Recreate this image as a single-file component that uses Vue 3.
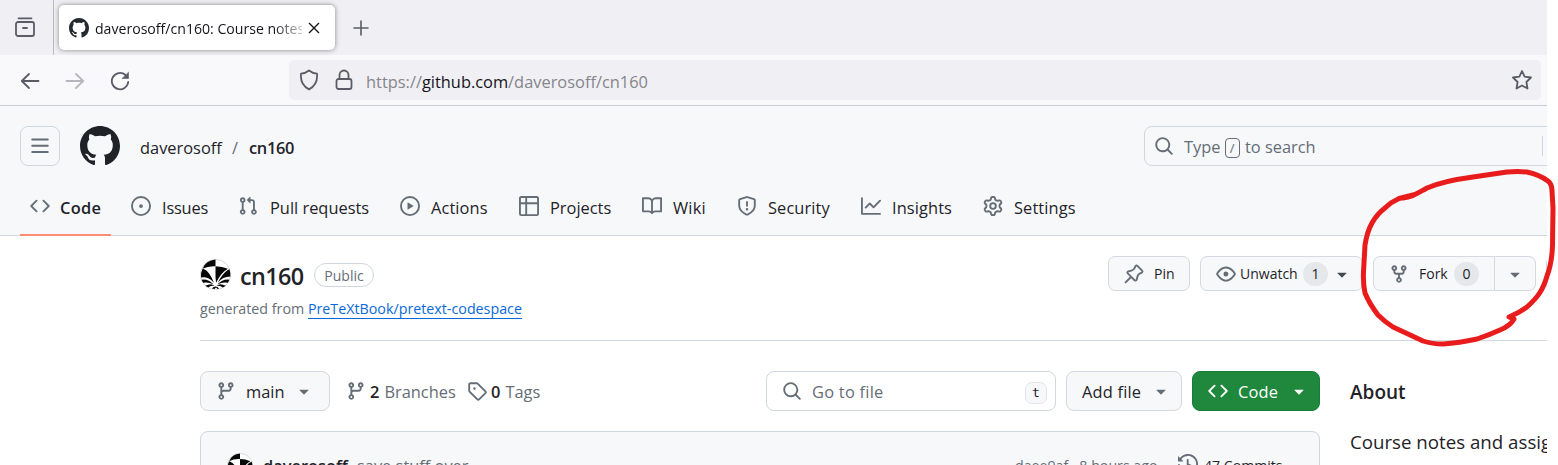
<script setup>
import { h } from 'vue'

const paths = {
  code: 'm11.28 3.22 4.25 4.25a.75.75 0 0 1 0 1.06l-4.25 4.25a.749.749 0 0 1-1.275-.326.749.749 0 0 1 .215-.734L13.94 8l-3.72-3.72a.749.749 0 0 1 .326-1.275.749.749 0 0 1 .734.215Zm-6.56 0a.751.751 0 0 1 1.042.018.751.751 0 0 1 .018 1.042L2.06 8l3.72 3.72a.749.749 0 0 1-.326 1.275.749.749 0 0 1-.734-.215L.47 8.53a.75.75 0 0 1 0-1.06Z',
  issue: 'M8 9.5a1.5 1.5 0 1 0 0-3 1.5 1.5 0 0 0 0 3ZM8 0a8 8 0 1 1 0 16A8 8 0 0 1 8 0ZM1.5 8a6.5 6.5 0 1 0 13 0 6.5 6.5 0 0 0-13 0Z',
  pr: 'M1.5 3.25a2.25 2.25 0 1 1 3 2.122v5.256a2.251 2.251 0 1 1-1.5 0V5.372A2.25 2.25 0 0 1 1.5 3.25Zm5.677-.177L9.573.677A.25.25 0 0 1 10 .854V2.5h1A2.5 2.5 0 0 1 13.5 5v5.628a2.251 2.251 0 1 1-1.5 0V5a1 1 0 0 0-1-1h-1v1.646a.25.25 0 0 1-.427.177L7.177 3.427a.25.25 0 0 1 0-.354ZM3.75 2.5a.75.75 0 1 0 0 1.5.75.75 0 0 0 0-1.5Zm0 9.5a.75.75 0 1 0 0 1.5.75.75 0 0 0 0-1.5Zm8.25.75a.75.75 0 1 0 1.5 0 .75.75 0 0 0-1.5 0Z',
  play: 'M8 0a8 8 0 1 1 0 16A8 8 0 0 1 8 0ZM1.5 8a6.5 6.5 0 1 0 13 0 6.5 6.5 0 0 0-13 0Zm4.879-2.773 4.264 2.559a.25.25 0 0 1 0 .428l-4.264 2.559A.25.25 0 0 1 6 10.559V5.442a.25.25 0 0 1 .379-.215Z',
  table: 'M0 1.75C0 .784.784 0 1.75 0h12.5C15.216 0 16 .784 16 1.75v12.5A1.75 1.75 0 0 1 14.25 16H1.75A1.75 1.75 0 0 1 0 14.25ZM6.5 6.5v8h7.75a.25.25 0 0 0 .25-.25V6.5Zm8-1.5V1.75a.25.25 0 0 0-.25-.25H6.5V5Zm-13 1.5v7.75c0 .138.112.25.25.25H5v-8ZM5 5V1.5H1.75a.25.25 0 0 0-.25.25V5Z',
  book: 'M0 1.75A.75.75 0 0 1 .75 1h4.253c1.227 0 2.317.59 3 1.501A3.743 3.743 0 0 1 11.006 1h4.245a.75.75 0 0 1 .75.75v10.5a.75.75 0 0 1-.75.75h-4.507a2.25 2.25 0 0 0-1.591.659l-.622.621a.75.75 0 0 1-1.06 0l-.622-.621A2.25 2.25 0 0 0 5.258 13H.75a.75.75 0 0 1-.75-.75Zm7.251 10.324.004-5.073-.002-2.253A2.25 2.25 0 0 0 5.003 2.5H1.5v9h3.757a3.75 3.75 0 0 1 1.994.574ZM8.755 4.75l-.004 7.322a3.752 3.752 0 0 1 1.992-.572H14.5v-9h-3.495a2.25 2.25 0 0 0-2.25 2.25Z',
  shield: 'M7.467.133a1.748 1.748 0 0 1 1.066 0l5.25 1.68A1.75 1.75 0 0 1 15 3.48V7c0 1.566-.32 3.182-1.303 4.682-.983 1.498-2.585 2.813-5.032 3.855a1.697 1.697 0 0 1-1.33 0c-2.447-1.042-4.049-2.357-5.032-3.855C1.32 10.182 1 8.566 1 7V3.48a1.75 1.75 0 0 1 1.217-1.667Zm.61 1.429a.25.25 0 0 0-.153 0l-5.25 1.68a.25.25 0 0 0-.174.238V7c0 1.358.275 2.666 1.057 3.86.784 1.194 2.121 2.34 4.366 3.297a.196.196 0 0 0 .154 0c2.245-.956 3.582-2.104 4.366-3.298C13.225 9.666 13.5 8.36 13.5 7V3.48a.251.251 0 0 0-.174-.237l-5.25-1.68ZM8.75 4.75v3a.75.75 0 0 1-1.5 0v-3a.75.75 0 0 1 1.5 0ZM9 10.5a1 1 0 1 1-2 0 1 1 0 0 1 2 0Z',
  graph: 'M1.5 1.75V13.5h13.75a.75.75 0 0 1 0 1.5H.75a.75.75 0 0 1-.75-.75V1.75a.75.75 0 0 1 1.5 0Zm14.28 2.53-5.25 5.25a.75.75 0 0 1-1.06 0L7 7.06 4.28 9.78a.751.751 0 0 1-1.042-.018.751.751 0 0 1-.018-1.042l3.25-3.25a.75.75 0 0 1 1.06 0L10 7.94l4.72-4.72a.751.751 0 0 1 1.042.018.751.751 0 0 1 .018 1.042Z',
  gear: 'M8 0a8.2 8.2 0 0 1 .701.031C9.444.095 9.99.645 10.16 1.29l.288 1.107c.018.066.079.158.212.224.231.114.454.243.668.386.123.082.233.09.299.071l1.103-.303c.644-.176 1.392.021 1.82.63.27.385.506.792.704 1.218.315.675.111 1.422-.364 1.891l-.814.806c-.049.048-.098.147-.088.294.016.257.016.515 0 .772-.01.147.038.246.088.294l.814.806c.475.469.679 1.216.364 1.891a7.977 7.977 0 0 1-.704 1.217c-.428.61-1.176.807-1.82.63l-1.102-.302c-.067-.019-.177-.011-.3.071a5.909 5.909 0 0 1-.668.386c-.133.066-.194.158-.211.224l-.29 1.106c-.168.646-.715 1.196-1.458 1.26a8.006 8.006 0 0 1-1.402 0c-.743-.064-1.289-.614-1.458-1.26l-.289-1.106c-.018-.066-.079-.158-.212-.224a5.738 5.738 0 0 1-.668-.386c-.123-.082-.233-.09-.299-.071l-1.103.303c-.644.176-1.392-.021-1.82-.63a8.12 8.12 0 0 1-.704-1.218c-.315-.675-.111-1.422.363-1.891l.815-.806c.05-.048.098-.147.088-.294a6.214 6.214 0 0 1 0-.772c.01-.147-.038-.246-.088-.294l-.815-.806C.635 6.045.431 5.298.746 4.623a7.92 7.92 0 0 1 .704-1.217c.428-.61 1.176-.807 1.82-.63l1.102.302c.067.019.177.011.3-.071.214-.143.437-.272.668-.386.133-.066.194-.158.211-.224l.29-1.106C6.009.645 6.556.095 7.299.03 7.53.01 7.764 0 8 0Zm-.571 1.525c-.036.003-.108.036-.137.146l-.289 1.105c-.147.561-.549.967-.998 1.189-.173.086-.34.183-.5.29-.417.278-.97.423-1.529.27l-1.103-.303c-.109-.03-.175.016-.195.045-.22.312-.412.644-.573.99-.014.031-.021.11.059.19l.815.806c.411.406.562.957.53 1.456a4.709 4.709 0 0 0 0 .582c.032.499-.119 1.05-.53 1.456l-.815.806c-.081.08-.073.159-.059.19.162.346.353.677.573.989.02.03.085.076.195.046l1.102-.303c.56-.153 1.113-.008 1.53.27.161.107.328.204.501.29.447.222.85.629.997 1.189l.289 1.105c.029.109.101.143.137.146a6.6 6.6 0 0 0 1.142 0c.036-.003.108-.036.137-.146l.289-1.105c.147-.561.549-.967.998-1.189.173-.086.34-.183.5-.29.417-.278.97-.423 1.529-.27l1.103.303c.109.029.175-.016.195-.045.22-.313.411-.644.573-.99.014-.031.021-.11-.059-.19l-.815-.806c-.411-.406-.562-.957-.53-1.456a4.709 4.709 0 0 0 0-.582c-.032-.499.119-1.05.53-1.456l.815-.806c.081-.08.073-.159.059-.19a6.464 6.464 0 0 0-.573-.989c-.02-.03-.085-.076-.195-.046l-1.102.303c-.56.153-1.113.008-1.53-.27a4.44 4.44 0 0 0-.501-.29c-.447-.222-.85-.629-.997-1.189l-.289-1.105c-.029-.11-.101-.143-.137-.146a6.6 6.6 0 0 0-1.142 0ZM11 8a3 3 0 1 1-6 0 3 3 0 0 1 6 0ZM9.5 8a1.5 1.5 0 1 0-3.001.001A1.5 1.5 0 0 0 9.5 8Z',
  bars: 'M1 2.75A.75.75 0 0 1 1.75 2h12.5a.75.75 0 0 1 0 1.5H1.75A.75.75 0 0 1 1 2.75Zm0 5A.75.75 0 0 1 1.75 7h12.5a.75.75 0 0 1 0 1.5H1.75A.75.75 0 0 1 1 7.75ZM1.75 12h12.5a.75.75 0 0 1 0 1.5H1.75a.75.75 0 0 1 0-1.5Z',
  search: 'M10.68 11.74a6 6 0 0 1-7.922-8.982 6 6 0 0 1 8.982 7.922l3.04 3.04a.749.749 0 0 1-.326 1.275.749.749 0 0 1-.734-.215ZM11.5 7a4.499 4.499 0 1 0-8.997 0A4.499 4.499 0 0 0 11.5 7Z',
  pin: 'm11.294.984 3.722 3.722a1.75 1.75 0 0 1-.504 2.826l-1.327.613a3.089 3.089 0 0 0-1.707 2.084l-.584 2.454c-.317 1.332-1.972 1.8-2.94.832L5.75 11.311 1.78 15.28a.749.749 0 1 1-1.06-1.06l3.969-3.97-2.204-2.204c-.968-.968-.5-2.623.832-2.94l2.454-.584a3.08 3.08 0 0 0 2.084-1.707l.613-1.327a1.75 1.75 0 0 1 2.826-.504ZM6.283 9.723l2.732 2.731a.25.25 0 0 0 .42-.119l.584-2.454a4.586 4.586 0 0 1 2.537-3.098l1.328-.613a.25.25 0 0 0 .072-.404l-3.722-3.722a.25.25 0 0 0-.404.072l-.613 1.328a4.584 4.584 0 0 1-3.098 2.537l-2.454.584a.25.25 0 0 0-.119.42l2.731 2.732Z',
  eye: 'M8 2c1.981 0 3.671.992 4.933 2.078 1.27 1.091 2.187 2.345 2.637 3.023a1.62 1.62 0 0 1 0 1.798c-.45.678-1.367 1.932-2.637 3.023C11.67 13.008 9.981 14 8 14c-1.981 0-3.671-.992-4.933-2.078C1.797 10.83.88 9.576.43 8.898a1.62 1.62 0 0 1 0-1.798c.45-.677 1.367-1.931 2.637-3.022C4.33 2.992 6.019 2 8 2ZM1.679 7.932a.12.12 0 0 0 0 .136c.411.622 1.241 1.75 2.366 2.717C5.176 11.758 6.527 12.5 8 12.5c1.473 0 2.825-.742 3.955-1.715 1.124-.967 1.954-2.096 2.366-2.717a.12.12 0 0 0 0-.136c-.412-.621-1.242-1.75-2.366-2.717C10.824 4.242 9.473 3.5 8 3.5c-1.473 0-2.825.742-3.955 1.715-1.124.967-1.954 2.096-2.366 2.717ZM8 10a2 2 0 1 1-.001-3.999A2 2 0 0 1 8 10Z',
  fork: 'M5 5.372v.878c0 .414.336.75.75.75h4.5a.75.75 0 0 0 .75-.75v-.878a2.25 2.25 0 1 1 1.5 0v.878a2.25 2.25 0 0 1-2.25 2.25h-1.5v2.128a2.251 2.251 0 1 1-1.5 0V8.5h-1.5A2.25 2.25 0 0 1 3.5 6.25v-.878a2.25 2.25 0 1 1 1.5 0ZM5 3.25a.75.75 0 1 0-1.5 0 .75.75 0 0 0 1.5 0Zm6.75.75a.75.75 0 1 0 0-1.5.75.75 0 0 0 0 1.5Zm-3 8.75a.75.75 0 1 0-1.5 0 .75.75 0 0 0 1.5 0Z',
  branch: 'M9.5 3.25a2.25 2.25 0 1 1 3 2.122V6A2.5 2.5 0 0 1 10 8.5H6a1 1 0 0 0-1 1v1.128a2.251 2.251 0 1 1-1.5 0V5.372a2.25 2.25 0 1 1 1.5 0v1.836A2.493 2.493 0 0 1 6 7h4a1 1 0 0 0 1-1v-.628A2.25 2.25 0 0 1 9.5 3.25Zm-6 0a.75.75 0 1 0 1.5 0 .75.75 0 0 0-1.5 0Zm8.25-.75a.75.75 0 1 0 0 1.5.75.75 0 0 0 0-1.5ZM4.25 12a.75.75 0 1 0 0 1.5.75.75 0 0 0 0-1.5Z',
  tag: 'M1 7.775V2.75C1 1.784 1.784 1 2.75 1h5.025c.464 0 .91.184 1.238.513l6.25 6.25a1.75 1.75 0 0 1 0 2.474l-5.026 5.026a1.75 1.75 0 0 1-2.474 0l-6.25-6.25A1.752 1.752 0 0 1 1 7.775Zm1.5 0c0 .066.026.13.073.177l6.25 6.25a.25.25 0 0 0 .354 0l5.025-5.025a.25.25 0 0 0 0-.354l-6.25-6.25a.25.25 0 0 0-.177-.073H2.75a.25.25 0 0 0-.25.25ZM6 5a1 1 0 1 1 0 2 1 1 0 0 1 0-2Z',
  history: 'm.427 1.927 1.215 1.215a8.002 8.002 0 1 1-1.6 5.685.75.75 0 1 1 1.493-.154 6.5 6.5 0 1 0 1.18-4.458l1.358 1.358A.25.25 0 0 1 3.896 6H.25A.25.25 0 0 1 0 5.75V2.104a.25.25 0 0 1 .427-.177ZM7.75 4a.75.75 0 0 1 .75.75v2.992l2.028.812a.75.75 0 0 1-.557 1.392l-2.5-1A.751.751 0 0 1 7 8.25v-3.5A.75.75 0 0 1 7.75 4Z',
  github: 'M8 0c4.42 0 8 3.58 8 8a8.013 8.013 0 0 1-5.45 7.59c-.4.08-.55-.17-.55-.38 0-.27.01-1.13.01-2.2 0-.75-.25-1.23-.54-1.48 1.78-.2 3.65-.88 3.65-3.95 0-.88-.31-1.59-.82-2.15.08-.2.36-1.02-.08-2.12 0 0-.67-.22-2.2.82-.64-.18-1.32-.27-2-.27-.68 0-1.36.09-2 .27-1.53-1.03-2.2-.82-2.2-.82-.44 1.1-.16 1.92-.08 2.12-.51.56-.82 1.28-.82 2.15 0 3.06 1.86 3.75 3.64 3.95-.23.2-.44.55-.51 1.07-.46.21-1.61.55-2.33-.66-.15-.24-.6-.83-1.23-.82-.67.01-.27.38.01.53.34.19.73.9.82 1.13.16.45.68 1.31 2.69.94 0 .67.01 1.3.01 1.49 0 .21-.15.45-.55.38A7.995 7.995 0 0 1 0 8c0-4.42 3.58-8 8-8Z',
  caret: 'm4.427 7.427 3.396 3.396a.25.25 0 0 0 .354 0l3.396-3.396A.25.25 0 0 0 11.396 7H4.604a.25.25 0 0 0-.177.427Z',
}

const Octicon = (props) =>
  h('svg', { viewBox: '0 0 16 16', fill: 'currentColor', class: 'octicon' }, [h('path', { d: paths[props.name] })])
Octicon.props = ['name']

const avatarShapes = [
  'M15 0.600V7Q8 6.500 2.500 9.500Q5.500 1.500 15 0.600Z',
  'M15 7Q21.500 7 27 9.500Q20.500 13 15.600 23L15 18Z',
  'M2.500 9.500L4 10Q9 12 13.500 23Q7.500 16.500 1 18Q0.500 13 2.500 9.500Z',
  'M28.500 10Q29.500 13 29.400 17Q22 17 17.200 23Q21.500 14.500 26.500 11Z',
  'M1.500 20Q8 19 13 24.500Q8 22 3 23Z',
  'M28.500 20Q22 19 17 24.500Q22 22 27 23Z',
  'M5 26Q11 23 14 26Q10 25.500 8 27.500Z',
  'M25 26Q19 23 16 26Q20 25.500 22 27.500Z',
  'M11.500 28.500Q13 26.500 15 26.500Q17 26.500 18.500 28.500L17 29L15.500 27.500L14 29Z',
]
const Avatar = () =>
  h('svg', { viewBox: '0 0 30 30', class: 'avatar' }, [
    h('circle', { cx: 15, cy: 15, r: 14.6, fill: '#fff', stroke: '#c9cdd2', 'stroke-width': 0.8 }),
    ...avatarShapes.map((d) => h('path', { d, fill: '#080808' })),
  ])

const tabs = [
  { id: 'code', label: 'Code', icon: 'code' },
  { id: 'issues', label: 'Issues', icon: 'issue' },
  { id: 'pulls', label: 'Pull requests', icon: 'pr' },
  { id: 'actions', label: 'Actions', icon: 'play' },
  { id: 'projects', label: 'Projects', icon: 'table' },
  { id: 'wiki', label: 'Wiki', icon: 'book' },
  { id: 'security', label: 'Security', icon: 'shield' },
  { id: 'insights', label: 'Insights', icon: 'graph' },
  { id: 'settings', label: 'Settings', icon: 'gear' },
]
</script>

<template>
  <div class="screen">
    <div class="window">
      <div class="tabstrip">
        <div class="view">
          <svg class="line-icon" width="22" height="22" viewBox="0 0 22 22">
            <path d="M4.5 2.300h13M4 6h14a2 2 0 0 1 2 2v10a2 2 0 0 1-2 2H4a2 2 0 0 1-2-2V8a2 2 0 0 1 2-2ZM9 12h4" />
          </svg>
        </div>
        <div class="tab">
          <Octicon name="github" />
          <span class="tab-title">daverosoff/cn160: Course notes</span>
          <svg class="close" width="12" height="12" viewBox="0 0 12 12"><path d="M1 1l10 10M11 1L1 11" /></svg>
        </div>
        <svg class="line-icon plus" width="16" height="16" viewBox="0 0 16 16"><path d="M8 1v14M1 8h14" /></svg>
      </div>

      <div class="toolbar">
        <div class="history-buttons">
          <svg class="line-icon" width="20" height="20" viewBox="0 0 20 20"><path d="M18.500 10H2M9 3L1.800 10 9 17" /></svg>
          <svg class="line-icon dim" width="20" height="20" viewBox="0 0 20 20"><path d="M1.500 10H18M11 3L18.200 10 11 17" /></svg>
          <svg class="line-icon" width="20" height="20" viewBox="0 0 20 20">
            <path d="M18.200 11A8.200 8.200 0 1 1 15.500 4" /><path class="solid" d="M18.500 1.500v6h-6.200Z" />
          </svg>
        </div>
        <div class="urlbar">
          <svg class="line-icon" width="20" height="22" viewBox="0 0 20 22"><path d="M10 1.500c2.500 2 5 3 8 3.200.6 6-1 12-8 15.700C3 16.700 1.400 10.700 2 4.700 5 4.500 7.500 3.500 10 1.500Z" /></svg>
          <svg class="line-icon lock" width="18" height="22" viewBox="0 0 18 22"><path d="M4.500 10V6a4.500 4.500 0 0 1 9 0v4M3.500 10h11a2 2 0 0 1 2 2v6a2 2 0 0 1-2 2h-11a2 2 0 0 1-2-2v-6a2 2 0 0 1 2-2Z" /></svg>
          <span class="url">https://<b>github.com</b>/daverosoff/cn160</span>
          <svg class="line-icon star" width="22" height="22" viewBox="0 0 22 22"><path d="M11 2l2.600 5.700 6.400.8-4.600 4.500 1.100 6.500L11 16.500 5.500 19.500 6.600 13 2 8.500l6.400-.8Z" /></svg>
        </div>
      </div>

      <header class="gh-header">
        <div class="context">
          <button class="menu"><Octicon name="bars" /></button>
          <Octicon name="github" class="mark" />
          <span class="owner">daverosoff</span>
          <span class="slash">/</span>
          <span class="repo">cn160</span>
          <div class="gh-search">
            <Octicon name="search" />
            <span class="ph">Type <kbd>/</kbd> to search</span>
            <i class="divider"></i>
          </div>
        </div>
        <nav class="nav">
          <a v-for="t in tabs" :key="t.id" :class="['nav-item', t.id]">
            <Octicon :name="t.icon" /><span>{{ t.label }}</span>
          </a>
        </nav>
      </header>

      <main class="main">
        <section class="repo-head">
          <div class="repo-info">
            <div class="title-row">
              <Avatar />
              <h1>cn160</h1>
              <span class="label">Public</span>
            </div>
            <p class="origin">generated from <a>PreTeXtBook/pretext-codespace</a></p>
          </div>
          <div class="repo-actions">
            <button class="btn pin"><Octicon name="pin" /><span>Pin</span></button>
            <button class="btn watch"><Octicon name="eye" /><span>Unwatch</span><em>1</em><Octicon name="caret" class="caret" /></button>
            <div class="fork-group">
              <button class="btn fork"><Octicon name="fork" /><span>Fork</span><em>0</em></button>
              <button class="btn more"><Octicon name="caret" class="caret" /></button>
            </div>
            <button class="btn edge"></button>
          </div>
        </section>

        <div class="columns">
          <div class="files">
            <div class="file-bar">
              <button class="btn big main-branch"><Octicon name="branch" /><span>main</span><Octicon name="caret" class="caret" /></button>
              <span class="stat branches"><Octicon name="branch" /><b>2</b> Branches</span>
              <span class="stat tags"><Octicon name="tag" /><b>0</b> Tags</span>
              <div class="go-file"><Octicon name="search" /><span>Go to file</span><kbd>t</kbd></div>
              <button class="btn big add"><span>Add file</span><Octicon name="caret" class="caret" /></button>
              <button class="btn big clone"><Octicon name="code" /><span>Code</span><Octicon name="caret" class="caret" /></button>
            </div>
            <div class="commit">
              <Avatar />
              <b>daverosoff</b>
              <span class="msg">save stuff over</span>
              <span class="sha">daee9af · 8 hours ago</span>
              <Octicon name="history" />
              <span class="count">47 Commits</span>
            </div>
          </div>
          <aside class="about">
            <h2>About</h2>
            <p>Course notes and assignments</p>
          </aside>
        </div>
      </main>
    </div>

    <svg class="marker" width="1558" height="465" viewBox="0 0 1558 465">
      <path d="M1403 198C1412 197 1416 194 1427 188Q1443 181 1473 177L1507 172Q1518 171 1527 172Q1540 175 1548 181Q1552 184 1552 191L1553 208L1552.500 245Q1552 263 1547 276C1543 290 1538 297 1527 307Q1519 313 1509 317L1514 319Q1510 326 1500 330Q1489 335 1477 339Q1459 343 1443 344Q1432 344 1423 341Q1408 334 1393 327Q1385 322 1378 315Q1369 303 1365 293Q1363 284 1363.500 272L1365 245Q1367 232 1372 223Q1377 214 1385 208Q1391 202 1399 198.500L1415 194.500" />
    </svg>
  </div>
</template>

<style>
body { background: #fff; overflow: hidden; }
</style>

<style scoped>
* { box-sizing: border-box; }
.screen {
  position: relative; width: 1558px; height: 465px; overflow: hidden; background: #fff;
  font-family: "Open Sans", "Noto Sans", sans-serif; font-size: 16.4px; color: #1f2328;
}
.window { width: 1547px; height: 465px; overflow: hidden; }
svg { flex: none; display: block; }
span, b, em, h1, h2 { white-space: nowrap; }
button { font: inherit; color: inherit; margin: 0; padding: 0; }
.octicon { width: 20px; height: 20px; color: #656d76; }
.line-icon { fill: none; stroke: #5b5b66; stroke-width: 1.8; stroke-linecap: round; stroke-linejoin: round; }
.line-icon .solid { fill: #5b5b66; stroke-width: 0.6; }
.dim { opacity: 0.42; }

.tabstrip { height: 55px; background: #f0f0f4; display: flex; align-items: center; }
.view { width: 54px; height: 55px; border-right: 1px solid #b8b8be; padding: 16px 0 0 14px; }
.tab {
  width: 276px; height: 45px; margin-left: 5px; padding: 0 15px 0 10px; display: flex; align-items: center;
  background: #fff; border-radius: 5px; box-shadow: 0 0 5px rgba(0, 0, 0, 0.45);
}
.tab .octicon { color: #24292f; }
.tab-title {
  width: 207px; margin-left: 6px; margin-right: 6px; padding-top: 1px; overflow: hidden; font-size: 14.1px; color: #15141a;
  mask-image: linear-gradient(to right, #000 178px, transparent 216px);
}
.close { fill: none; stroke: #15141a; stroke-width: 1.4; }
.plus { margin-left: 18px; stroke-width: 1.6; }

.toolbar { height: 51px; background: #f9f9fb; border-bottom: 1px solid #ccccd1; display: flex; padding: 5px 6px 0 20px; }
.history-buttons { width: 269px; height: 40px; display: flex; align-items: center; gap: 25px; padding-top: 2px; }
.urlbar { flex: 1; height: 40px; background: #f0f0f4; border-radius: 5px; display: flex; align-items: center; padding: 0 8px 0 10px; }
.lock { margin-left: 16px; }
.url { margin-left: 13px; padding-top: 3px; color: #85858c; }
.url b { font-weight: 400; color: #15141a; }
.star { margin-left: auto; }

.gh-header { height: 130px; background: #f6f8fa; border-bottom: 1px solid #d0d7de; padding-top: 20px; }
.context { height: 40px; padding-left: 20px; display: flex; align-items: center; }
.menu { width: 40px; height: 40px; border: 1px solid #d0d7de; border-radius: 8px; background: none; padding-left: 9px; }
.mark { width: 40px; height: 40px; color: #1f2328; margin: 0 20px; }
.owner { width: 92px; padding-top: 2px; }
.slash { width: 17px; padding-top: 2px; color: #656d76; }
.repo { padding-top: 2px; font-weight: 600; letter-spacing: -0.3px; }
.gh-search {
  width: 450px; height: 40px; flex: none; margin-left: auto; margin-right: -47px; border: 1px solid #d0d7de; border-radius: 8px;
  display: flex; align-items: center; padding-left: 9px; color: #656d76;
}
.gh-search .ph { margin-left: 10px; width: 358px; }
.gh-search kbd { display: inline-block; width: 15px; height: 20px; border: 1px solid #656d76; border-radius: 4px; font: 13px/18px "Open Sans", sans-serif; text-align: center; margin: 0 1px 0 0; }
.divider { width: 1px; height: 20px; background: #d0d7de; }

.nav { height: 70px; padding-left: 20px; display: flex; }
.nav-item { height: 70px; padding: 13px 0 0 10px; display: flex; align-items: center; }
.nav-item .octicon { margin-top: -3px; margin-right: 11px; }
.nav-item.code { width: 91px; margin-right: 10px; font-weight: 600; letter-spacing: 0.3px; border-bottom: 2px solid #fd8c73; }
.nav-item.code span { padding-top: 2px; }
.nav-item.code .octicon { margin-top: -1px; margin-right: 10px; }
.issues { width: 107px; letter-spacing: -0.2px; }
.pulls { width: 162px; }
.pulls .octicon { margin-right: 12px; }
.actions { width: 119px; letter-spacing: 0.1px; }
.projects { width: 123px; }
.wiki { width: 95px; letter-spacing: 0.2px; }
.security { width: 124px; letter-spacing: 0.1px; }
.insights { width: 122px; letter-spacing: 0.1px; }
.settings { letter-spacing: 0.1px; }

.main { padding-left: 200px; }
.repo-head { height: 105px; border-bottom: 1px solid #d0d7de; display: flex; padding-top: 20px; }
.repo-info { width: 908px; flex: none; }
.title-row { display: flex; align-items: center; height: 38px; }
.avatar { width: 31px; height: 31px; margin-top: -1px; }
h1 { margin: 2px 0 0 9px; width: 74px; font-size: 23.4px; line-height: 38px; font-weight: 600; letter-spacing: -0.6px; }
.label { width: 60px; height: 24px; border: 1px solid #d0d7de; border-radius: 12px; text-align: center; font-size: 14px; line-height: 23px; color: #656d76; }
.origin { margin: 5px 0 0; font-size: 14.27px; line-height: 20px; color: #656d76; }
.origin a { display: inline-block; height: 20px; color: #0969da; border-bottom: 1px solid #0969da; }
.repo-actions { display: flex; font-size: 14px; }
.btn { height: 35px; border: 1px solid #d3d9df; border-radius: 7px; background: #f6f8fa; display: flex; align-items: center; flex: none; text-align: left; }
.btn em { width: 25px; height: 24px; border-radius: 12px; background: #e5e8ea; font-style: normal; line-height: 24px; text-align: center; }
.pin { width: 82px; padding-left: 15px; margin-right: 10px; }
.pin span { margin-left: 10px; }
.watch { width: 163px; padding-left: 15px; margin-right: 10px; }
.watch span { width: 63px; margin-left: 4px; }
.watch .caret { margin-left: 4px; color: #424a53; }
.fork-group { display: flex; margin-right: 10px; }
.fork { width: 122px; border-radius: 7px 0 0 7px; padding-left: 15px; }
.fork span { width: 35px; margin-left: 10px; }
.more { width: 41px; border-left: 0; border-radius: 0 7px 7px 0; padding-left: 10px; }
.edge { width: 60px; }

.columns { display: flex; padding-top: 30px; }
.files { width: 1120px; flex: none; }
.file-bar { display: flex; height: 40px; align-items: center; }
.big { height: 40px; border-radius: 8px; }
.main-branch { width: 130px; padding-left: 15px; }
.main-branch span { width: 38px; margin: 0 10px; }
.stat { display: flex; align-items: center; color: #656d76; }
.stat b { color: #1f2328; font-weight: 600; margin: 0 5px 0 4px; }
.branches { width: 121px; margin-left: 16px; }
.tags { width: 100px; }
.go-file { width: 290px; height: 40px; margin-left: auto; border: 1px solid #d0d7de; border-radius: 8px; display: flex; align-items: center; padding: 0 8px 0 15px; color: #656d76; }
.go-file span { margin-left: 10px; letter-spacing: 0.25px; }
.go-file kbd { margin: 3px 0 0 auto; width: 22px; height: 22px; border: 1px solid #e2e6ea; border-radius: 7px; background: #f6f8fa; color: #1f2328; font: 13px/20px "DejaVu Sans Mono", monospace; text-align: center; }
.add { width: 116px; margin-left: 10px; padding-left: 15px; }
.add span { width: 60px; margin-right: 9px; letter-spacing: 0.2px; }
.clone { width: 128px; margin-left: 10px; padding-left: 15px; background: #1f883d; border-color: #1b7c37; color: #fff; }
.clone .octicon { color: #fff; }
.clone span { width: 42px; margin: 0 9px 0 10px; letter-spacing: 0.2px; }
.commit { height: 68px; margin-top: 20px; border: 1px solid #d0d7de; border-radius: 8px 8px 0 0; background: #f6f8fa; display: flex; align-items: center; padding: 0 36px 0 26px; color: #656d76; }
.commit .avatar { width: 26px; height: 26px; margin-top: 1px; }
.commit b { width: 94px; margin-left: 10px; color: #1f2328; font-weight: 600; }
.sha { margin-left: auto; margin-right: 20px; width: 143px; font-size: 14.2px; }
.commit .octicon { margin-top: -2px; }
.count { width: 79px; margin-left: 6px; font-size: 14.1px; font-weight: 500; color: #1f2328; }
.about { margin-left: 30px; }
h2 { margin: 0; padding-top: 1px; font-size: 19px; line-height: 40px; font-weight: 600; }
.about p { margin: 15px 0 0; font-size: 18.7px; line-height: 30px; white-space: nowrap; }

.marker { position: absolute; inset: 0; fill: none; stroke: #e81c1c; stroke-width: 5; stroke-linecap: round; stroke-linejoin: round; }
</style>
